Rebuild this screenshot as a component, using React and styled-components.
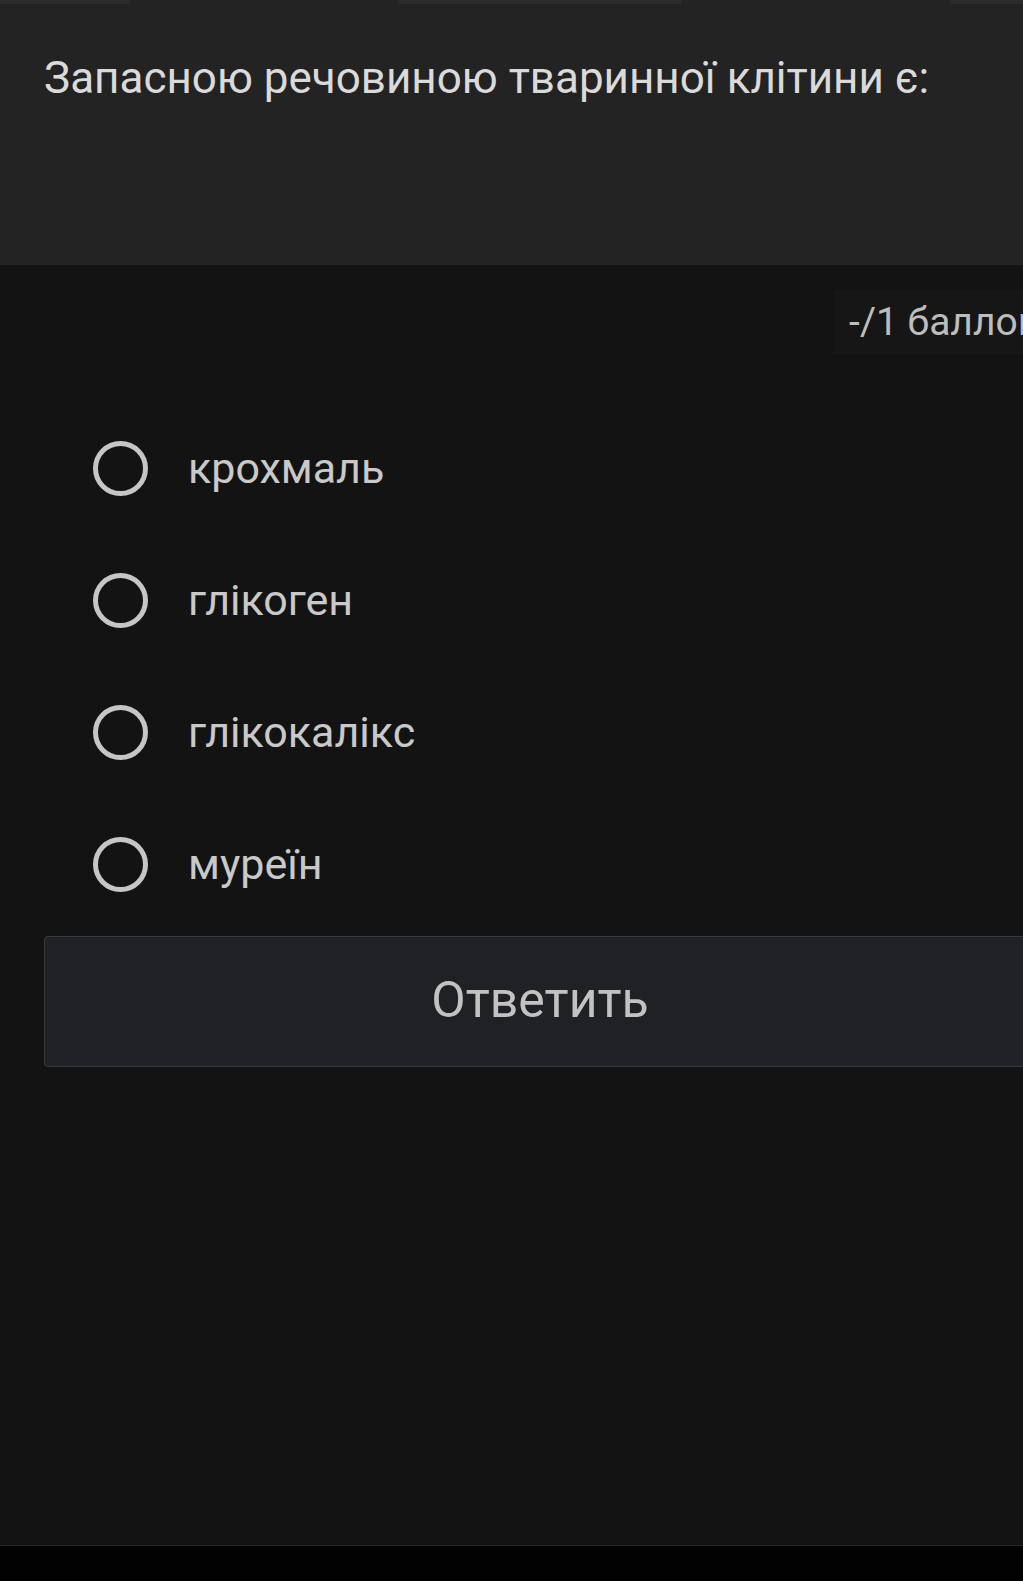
import React, { useState } from 'react';
import styled, { createGlobalStyle } from 'styled-components';

const GlobalStyle = createGlobalStyle`
  html, body {
    margin: 0;
    padding: 0;
    background: #131313;
    overflow: hidden;
  }
  body {
    font-family: Roboto, 'Noto Sans', sans-serif;
  }
`;

const Screen = styled.div`
  width: 1080px;
  height: 1581px;
  display: flex;
  flex-direction: column;
  background: #131313;
`;

const Header = styled.header`
  height: 265px;
  flex-shrink: 0;
  background: #232323;
  display: flex;
  flex-direction: column;
`;

const ScrollStrip = styled.div`
  height: 4px;
  display: flex;
`;

const StripPiece = styled.span`
  width: ${({ w }) => w}px;
  background: ${({ lit }) => (lit ? '#2c2c2c' : 'transparent')};
`;

const Question = styled.h1`
  margin: 0;
  padding: 46px 44px 0;
  font-size: 44px;
  font-weight: 400;
  line-height: 56px;
  color: #dadada;
`;

const Body = styled.main`
  flex: 1;
  display: flex;
  flex-direction: column;
  padding: 0 44px;
`;

const ScoreRow = styled.div`
  display: flex;
  justify-content: flex-end;
  padding-top: 25px;
  margin-right: -32px;
`;

const Score = styled.span`
  height: 64px;
  padding: 0 28px 0 15px;
  display: flex;
  align-items: center;
  background: #161616;
  font-size: 39px;
  color: #bdbdbd;
  white-space: nowrap;
`;

const Options = styled.div`
  margin-top: 48px;
  display: flex;
  flex-direction: column;
`;

const Option = styled.label`
  height: 132px;
  display: flex;
  align-items: center;
  gap: 40px;
  padding-left: 49px;
  cursor: pointer;
`;

const Radio = styled.span`
  width: 45px;
  height: 45px;
  flex-shrink: 0;
  border-radius: 50%;
  border: 5px solid #c6c6c6;
  position: relative;
  &::after {
    content: '';
    position: absolute;
    inset: 8px;
    border-radius: 50%;
    background: ${({ checked }) => (checked ? '#c6c6c6' : 'transparent')};
  }
`;

const OptionText = styled.span`
  font-size: 43px;
  color: #c9c9c9;
`;

const AnswerButton = styled.button`
  margin-top: 6px;
  height: 131px;
  border: 1px solid #3a3a3c;
  border-radius: 4px;
  background: #202124;
  color: #c2c2c2;
  font-family: Roboto, 'Noto Sans', sans-serif;
  font-size: 50px;
  font-weight: 400;
  padding-bottom: 4px;
`;

const Spacer = styled.div`
  flex: 1;
`;

const NavBar = styled.div`
  height: 35px;
  flex-shrink: 0;
  background: #020202;
  border-top: 1px solid #2a2a2a;
`;

const answers = ['крохмаль', 'глікоген', 'глікокалікс', 'муреїн'];

export default function App() {
  const [picked, setPicked] = useState(null);

  return (
    <>
      <GlobalStyle />
      <Screen>
        <Header>
          <ScrollStrip>
            <StripPiece w={130} lit />
            <StripPiece w={268} />
            <StripPiece w={283} lit />
            <StripPiece w={269} />
            <StripPiece w={130} lit />
          </ScrollStrip>
          <Question>Запасною речовиною тваринної клітини є:</Question>
        </Header>
        <Body>
          <ScoreRow>
            <Score>-/1 баллов</Score>
          </ScoreRow>
          <Options>
            {answers.map((a, i) => (
              <Option key={a} onClick={() => setPicked(i)}>
                <Radio checked={picked === i} />
                <OptionText>{a}</OptionText>
              </Option>
            ))}
          </Options>
          <AnswerButton>Ответить</AnswerButton>
          <Spacer />
        </Body>
        <NavBar />
      </Screen>
    </>
  );
}
